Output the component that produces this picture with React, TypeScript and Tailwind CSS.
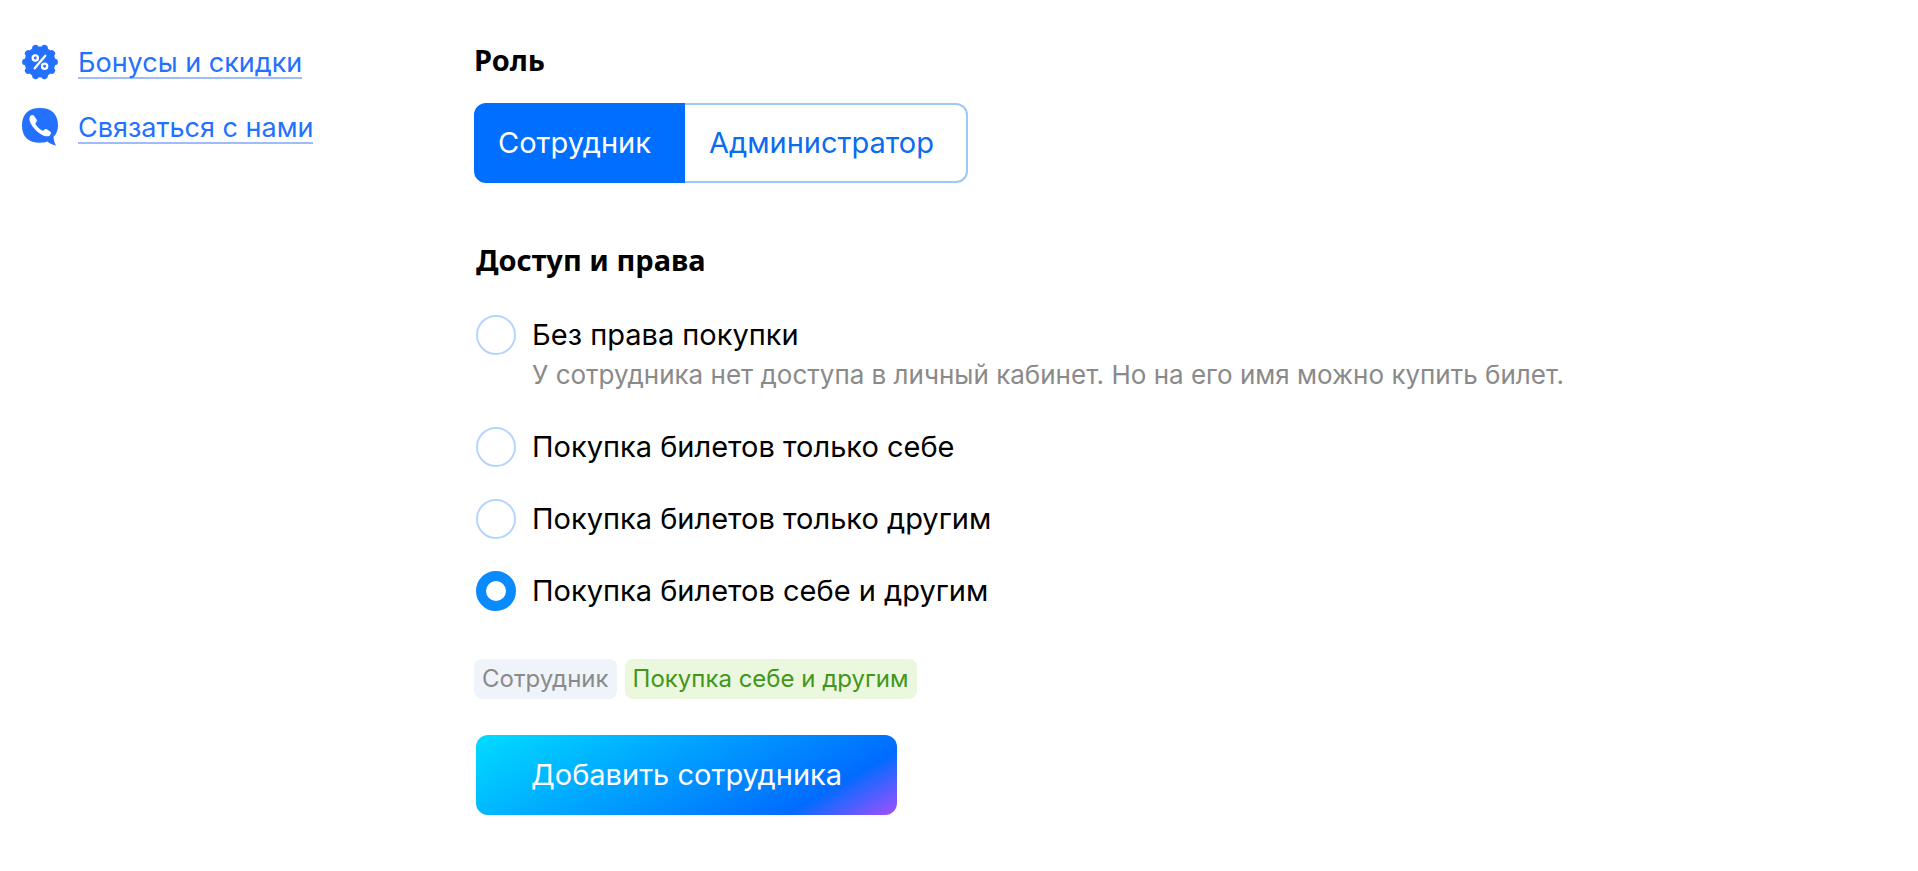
import React, { useState } from 'react';

const roles = ['Сотрудник', 'Администратор'];

const permissions = [
  {
    id: 'none',
    label: 'Без права покупки',
    hint: 'У сотрудника нет доступа в личный кабинет. Но на его имя можно купить билет.',
    tag: 'Без права покупки',
  },
  { id: 'self', label: 'Покупка билетов только себе', tag: 'Покупка только себе' },
  { id: 'others', label: 'Покупка билетов только другим', tag: 'Покупка только другим' },
  { id: 'all', label: 'Покупка билетов себе и другим', tag: 'Покупка себе и другим' },
];

const DiscountIcon: React.FC = () => (
  <svg viewBox="0 0 36 36" className="size-9 shrink-0" aria-hidden="true">
    <g fill="#2470ff">
      <circle cx="18" cy="18" r="15.4" />
      {[0, 36, 72, 108, 144, 180, 216, 252, 288, 324].map((angle) => (
        <circle key={angle} cx="32.6" cy="18" r="3.3" transform={`rotate(${angle} 18 18)`} />
      ))}
    </g>
    <g fill="none" stroke="#fff" strokeWidth="2.3" strokeLinecap="round">
      <path d="M23.3 11.7 12.7 24.3" />
      <circle cx="13.3" cy="14" r="2.6" />
      <circle cx="22.6" cy="22.2" r="2.6" />
    </g>
  </svg>
);

const ContactIcon: React.FC = () => (
  <svg viewBox="0 0 36 38" className="h-[38px] w-9 shrink-0" aria-hidden="true">
    <path
      fill="#2470ff"
      d="M18 0C29.5 0 36 6 36 17.5C36 22 34.5 26 31.6 28.8C31.6 31.5 32.5 35 34 37.5C31 37.2 27.5 35.6 25.5 33.6C23.5 34.4 21 34.8 18 34.8C6.5 34.8 0 29 0 17.5C0 6 6.5 0 18 0Z"
    />
    <path
      fill="#fff"
      d="M8 8.5C9 7 11 6.5 12 7.8L14.6 11.6C15.3 12.7 14.5 13.8 13.7 14.8C13.2 15.5 13.4 16.2 14 17C15.6 19.2 17.5 21 19.700 22.3C20.5 22.8 21.2 22.9 21.8 22.3C22.7 21.4 23.7 20.7 24.8 21.3L28.2 23.6C29.5 24.6 29.2 26.2 27.8 27.4C25.8 29 22.5 28.6 18.5 26C14.2 23.1 10.6 19.2 8.6 15.2C7.3 12.6 7 10.2 8 8.5Z"
    />
  </svg>
);

const App: React.FC = () => {
  const [role, setRole] = useState('Сотрудник');
  const [permission, setPermission] = useState('all');
  const selected = permissions.find((item) => item.id === permission);

  return (
    <div className="flex min-h-screen bg-white font-['Inter','Noto_Sans',sans-serif] text-black">
      <nav className="flex w-[474px] shrink-0 flex-col gap-7 px-[22px] pt-11 text-[27px] leading-7 text-[#2470ff]">
        <a href="#bonuses" className="flex items-center gap-5">
          <DiscountIcon />
          <span className="border-b-2 border-[#9dbcf8] pt-1">Бонусы и скидки</span>
        </a>
        <a href="#contacts" className="flex items-center gap-5">
          <ContactIcon />
          <span className="border-b-2 border-[#9dbcf8] pt-1">Связаться с нами</span>
        </a>
      </nav>

      <main className="flex flex-1 flex-col items-start pt-10 pb-14">
        <h2 className="font-['Noto_Sans',sans-serif] text-[29px] leading-10 font-bold">Роль</h2>
        <div className="mt-[23px] flex h-20 text-[29px]">
          {roles.map((name) => (
            <button
              key={name}
              type="button"
              onClick={() => setRole(name)}
              className={
                'border-2 pr-8 pl-[22px] first:rounded-l-xl last:rounded-r-xl ' +
                (role === name
                  ? 'border-[#006fff] bg-[#006fff] text-white'
                  : 'border-[#9fc7f8] text-[#0b6cf0] first:border-r-0 last:border-l-0 last:pl-6')
              }
            >
              {name}
            </button>
          ))}
        </div>

        <div className="mt-[57px] ml-0.5">
          <h2 className="font-['Noto_Sans',sans-serif] text-[29px] leading-10 font-bold">Доступ и права</h2>
          <div className="mt-[35px] flex flex-col gap-8">
            {permissions.map((item) => (
              <div key={item.id} className="flex items-start gap-4">
                <input
                  type="radio"
                  id={item.id}
                  name="permission"
                  checked={permission === item.id}
                  onChange={() => setPermission(item.id)}
                  className="size-10 shrink-0 appearance-none rounded-full border-2 border-[#b5d6fc] checked:border-[10px] checked:border-[#0a8aff]"
                />
                <div>
                  <label htmlFor={item.id} className="block text-[29px] leading-10">
                    {item.label}
                  </label>
                  {item.hint && <p className="text-[26px] leading-10 text-[#8a8a8a]">{item.hint}</p>}
                </div>
              </div>
            ))}
          </div>
        </div>

        <div className="mt-12 flex gap-2 text-2xl leading-10">
          <span className="rounded-lg bg-[#eff4fa] px-2 text-[#8a8a8a]">{role}</span>
          <span className="rounded-lg bg-[#ecf8de] px-2 text-[#41961b]">{selected?.tag}</span>
        </div>

        <button
          type="button"
          className="mt-9 ml-0.5 h-20 rounded-xl bg-[linear-gradient(150deg,#00dcff_0%,#006cff_80%,#a44fff_100%)] px-[55px] text-[29px] text-white"
        >
          Добавить сотрудника
        </button>
      </main>
    </div>
  );
};

export default App;
